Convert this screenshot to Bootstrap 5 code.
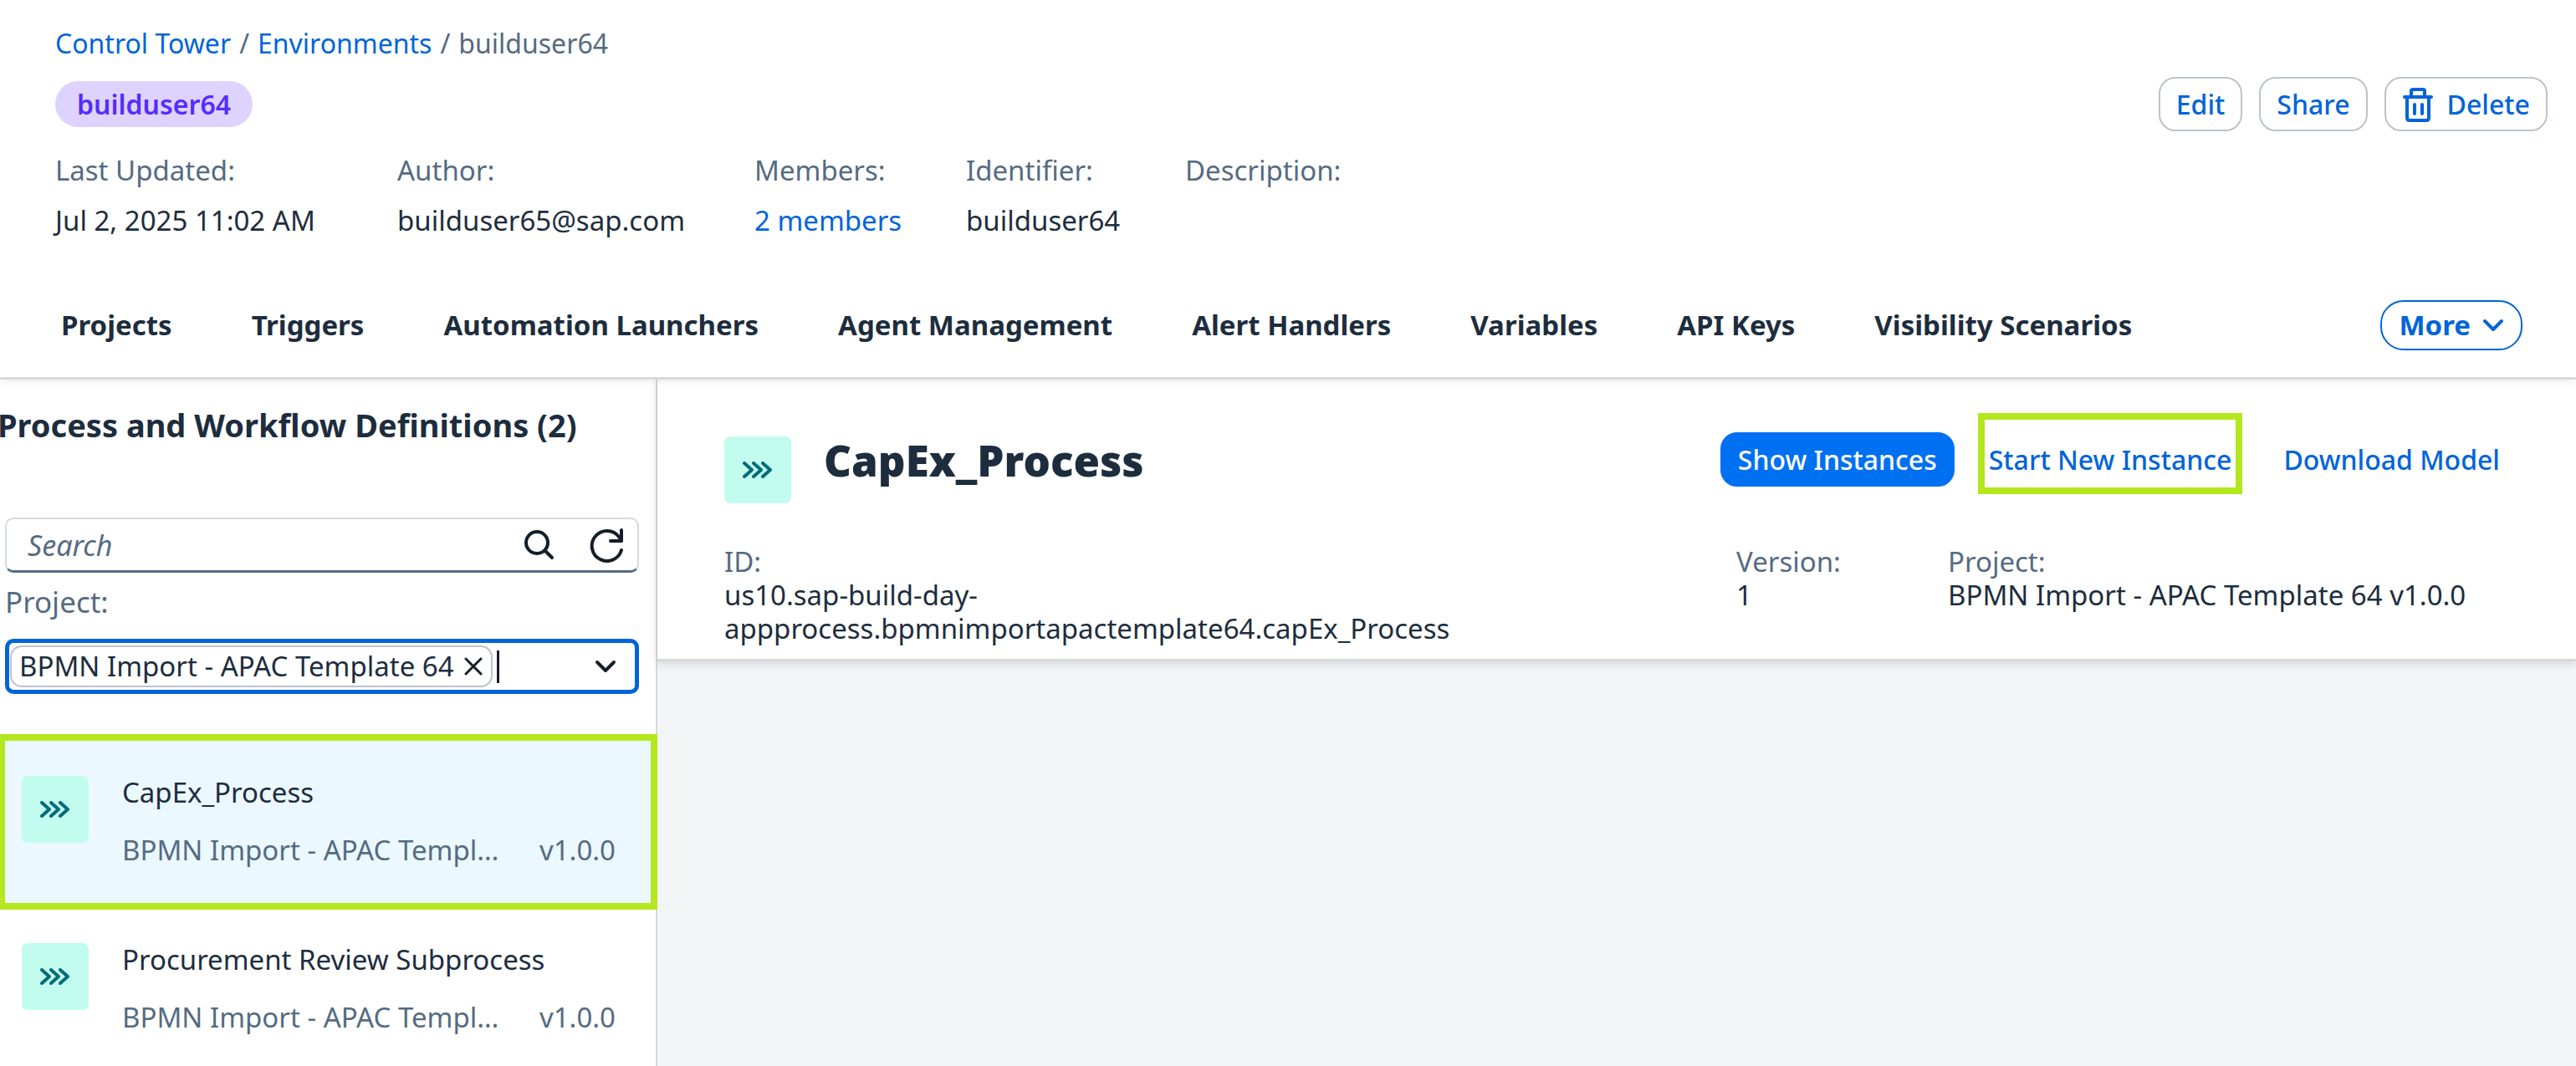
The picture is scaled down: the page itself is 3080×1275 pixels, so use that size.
<!DOCTYPE html>
<html lang="en">
<head>
<meta charset="utf-8">
<meta name="viewport" content="width=device-width, initial-scale=1">
<title>Control Tower - builduser64</title>
<link href="https://cdn.jsdelivr.net/npm/bootstrap@5.3.0/dist/css/bootstrap.min.css" rel="stylesheet">
<style>
  body { font-family: "Noto Sans", "Open Sans", sans-serif; font-size: 33px; line-height: 40px; color: #1d2d3e; background: #fff; }
  a { color: #0064d9; text-decoration: none; }
  svg { fill: none; stroke: currentColor; stroke-linecap: round; stroke-linejoin: round; flex: none; display: block; }
  .muted { color: #556b82; }

  .page-head { border-bottom: 3px solid #d9d9d9; box-shadow: 0 2px 8px rgba(34, 53, 72, .1); padding: 32px 34px 0 66px; }
  .breadcrumb { --bs-breadcrumb-divider-color: #556b82; --bs-breadcrumb-item-padding-x: 10px; --bs-breadcrumb-item-active-color: #556b82; --bs-breadcrumb-font-size: 32px; }
  .title-row { margin-top: 20px; }
  .env-tag { background: #ded3ff; color: #552cff; font-size: 32px; font-weight: 600; line-height: 55px; padding: 0 26px; }
  .btn-set { display: flex; gap: 20px; }
  .btn-ui { --bs-btn-font-size: 32px; --bs-btn-font-weight: 500; --bs-btn-line-height: 40px; --bs-btn-padding-x: 19px; --bs-btn-padding-y: 10px; --bs-btn-border-width: 2px; --bs-btn-border-radius: 20px; --bs-btn-color: #0064d9; height: 65px; white-space: nowrap; }
  .btn-line { --bs-btn-border-color: #bcc3ca; }
  .btn-fill { --bs-btn-bg: #0070f2; --bs-btn-border-color: #0070f2; --bs-btn-color: #fff; }
  .btn-more { --bs-btn-font-size: 33px; --bs-btn-font-weight: 700; --bs-btn-border-color: #0064d9; --bs-btn-border-radius: 28px; --bs-btn-padding-x: 20px; --bs-btn-padding-y: 8px; height: 60px; margin-right: 30px; gap: 14px; }
  .facts { display: grid; grid-template-columns: 409px 427px 253px 262px 1fr; margin: 27px 0 0; }
  .facts > div { display: flex; flex-direction: column; gap: 20px; }
  .facts dt, .facts dd, .specs dt, .specs dd { font-weight: 400; margin: 0; }
  .tab-row { margin: 75px 0 32px 7px; }
  .env-tabs { gap: 95px; }
  .env-tabs .nav-link { color: #1d2d3e; font-weight: 700; padding: 0; white-space: nowrap; }

  .side { width: 786px; border-right: 2px solid #d9d9d9; flex: none; }
  .side-title { font-size: 38px; line-height: 48px; font-weight: 700; margin: 30px 0 0 -3px; white-space: nowrap; }
  .field { margin: 0 20px 0 6px; }
  .search-box { border: 2px solid #d5dadd; border-bottom: 3px solid #556b82; border-radius: 10px; height: 66px; margin-top: 87px; padding: 0 16px 0 25px; }
  .plain-input { border: 0; outline: 0; background: none; padding: 0; min-width: 0; flex: 1; color: inherit; }
  .search-box .plain-input { font-style: italic; font-size: 34px; }
  .search-box .plain-input::placeholder { color: #556b82; opacity: 1; }
  .icon-btn { border: 0; background: none; padding: 0; color: #131e29; }
  .refresh { margin-left: 41px; }
  .project-label { font-size: 35px; line-height: 40px; margin: 15px 0 24px 6px; }
  .combo-box { border: 5px solid #0064d9; border-radius: 10px; height: 66px; padding: 0 22px 0 1px; }
  .token { border: 2px solid #bcc3ca; border-radius: 14px; height: 50px; padding: 0 10px 0 9px; gap: 12px; white-space: nowrap; }
  .caret { width: 3px; height: 39px; background: #131e29; margin-left: 5px; }

  .defs { margin-top: 53px; }
  .defs .def { display: flex; gap: 40px; height: 200px; padding: 45px 48px 0 26px; color: #1d2d3e; position: relative; }
  .defs .def.chosen { background: #ebf8ff; }
  .hint { position: absolute; border: 8px solid #b4e71d; pointer-events: none; }
  .hint-row { inset: -5px -2px -5px 0; border-left-width: 6px; z-index: 2; }
  .hint-btn { inset: -23px 8px -9px 8px; }
  .proc-tile { width: 80px; height: 80px; border-radius: 7px; background: #c2fcee; color: #046c7a; flex: none; display: flex; align-items: center; justify-content: center; }
  .def-sub { margin-top: 29px; }

  .detail { background: #f4f5f7; }
  .detail-head { background: #fff; border-bottom: 3px solid #d9d9d9; box-shadow: 0 3px 10px rgba(34, 53, 72, .16); padding: 63px 70px 16px 80px; }
  .detail-title { font-size: 51px; line-height: 66px; font-weight: 900; margin: 0 0 0 39px; }
  .detail-head .proc-tile { margin-top: 5px; }
  .specs { display: grid; grid-template-columns: 1210px 253px 1fr; margin: 50px 0 0; }
  .spec-id { max-width: 1000px; }
</style>
</head>
<body class="vh-100 d-flex flex-column overflow-hidden">

<header class="page-head position-relative z-1">
  <nav aria-label="Breadcrumb">
    <ol class="breadcrumb mb-0">
      <li class="breadcrumb-item"><a href="#">Control Tower</a></li>
      <li class="breadcrumb-item"><a href="#">Environments</a></li>
      <li class="breadcrumb-item active" aria-current="page">builduser64</li>
    </ol>
  </nav>
  <div class="title-row d-flex align-items-center justify-content-between">
    <span class="env-tag badge rounded-pill">builduser64</span>
    <div class="btn-set">
      <button type="button" class="btn btn-ui btn-line">Edit</button>
      <button type="button" class="btn btn-ui btn-line">Share</button>
      <button type="button" class="btn btn-ui btn-line d-flex align-items-center">
        <svg width="38" height="42" viewBox="0 0 38 42" stroke-width="4" class="me-3" aria-hidden="true"><path d="M3 12H35M11 12V5Q11 3 13 3H25Q27 3 27 5V12M6 12V37Q6 40 9 40H29Q32 40 32 37V12M15 21V32M24 21V32"/></svg>Delete</button>
    </div>
  </div>
  <dl class="facts">
    <div><dt class="muted">Last Updated:</dt><dd>Jul 2, 2025 11:02 AM</dd></div>
    <div><dt class="muted">Author:</dt><dd>builduser65@sap.com</dd></div>
    <div><dt class="muted">Members:</dt><dd><a href="#">2 members</a></dd></div>
    <div><dt class="muted">Identifier:</dt><dd>builduser64</dd></div>
    <div><dt class="muted">Description:</dt><dd></dd></div>
  </dl>
  <div class="tab-row d-flex align-items-center">
    <nav class="nav env-tabs flex-nowrap flex-grow-1" aria-label="Sections">
      <a class="nav-link" href="#">Projects</a>
      <a class="nav-link" href="#">Triggers</a>
      <a class="nav-link" href="#">Automation Launchers</a>
      <a class="nav-link" href="#">Agent Management</a>
      <a class="nav-link" href="#">Alert Handlers</a>
      <a class="nav-link" href="#">Variables</a>
      <a class="nav-link" href="#">API Keys</a>
      <a class="nav-link" href="#">Visibility Scenarios</a>
    </nav>
    <button type="button" class="btn btn-ui btn-more d-flex align-items-center">More
      <svg width="26" height="16" viewBox="0 0 26 16" stroke-width="4" aria-hidden="true"><path d="M3 3L13 13L23 3"/></svg></button>
  </div>
</header>

<div class="d-flex flex-grow-1 overflow-hidden">
  <aside class="side">
    <h2 class="side-title">Process and Workflow Definitions (2)</h2>
    <div class="field">
      <div class="search-box d-flex align-items-center">
        <input class="plain-input" type="search" placeholder="Search" aria-label="Search">
        <button class="icon-btn" type="button" aria-label="Search">
          <svg width="37" height="37" viewBox="0 0 37 37" stroke-width="4"><circle cx="16" cy="16" r="13"/><path d="M26 26L34 34"/></svg></button>
        <button class="icon-btn refresh" type="button" aria-label="Refresh">
          <svg width="42" height="42" viewBox="0 0 42 42" stroke-width="4"><path d="M39 27A18 18 0 1 1 36 11L39 16M39 3V16H26"/></svg></button>
      </div>
    </div>
    <label class="project-label muted d-block" for="project">Project:</label>
    <div class="field">
      <div class="combo-box d-flex align-items-center">
        <span class="token d-flex align-items-center">BPMN Import - APAC Template 64
          <button class="icon-btn" type="button" aria-label="Remove"><svg width="22" height="22" viewBox="0 0 22 22" stroke-width="3"><path d="M2 2L20 20M20 2L2 20"/></svg></button></span>
        <span class="caret"></span>
        <input class="plain-input" id="project" type="text">
        <button class="icon-btn" type="button" aria-label="Open list"><svg width="26" height="16" viewBox="0 0 26 16" stroke-width="4"><path d="M3 3L13 13L23 3"/></svg></button>
      </div>
    </div>
    <div class="defs">
      <a class="def chosen" href="#">
        <span class="proc-tile"><svg width="36" height="20" viewBox="0 0 36 20" stroke-width="4"><path d="M2 2L11 10L2 18M13 2L22 10L13 18M24 2L33 10L24 18"/></svg></span>
        <span class="flex-grow-1">
          <span class="d-block">CapEx_Process</span>
          <span class="def-sub muted d-flex justify-content-between"><span>BPMN Import - APAC Templ…</span><span>v1.0.0</span></span>
        </span>
        <span class="hint hint-row"></span>
      </a>
      <a class="def" href="#">
        <span class="proc-tile"><svg width="36" height="20" viewBox="0 0 36 20" stroke-width="4"><path d="M2 2L11 10L2 18M13 2L22 10L13 18M24 2L33 10L24 18"/></svg></span>
        <span class="flex-grow-1">
          <span class="d-block">Procurement Review Subprocess</span>
          <span class="def-sub muted d-flex justify-content-between"><span>BPMN Import - APAC Templ…</span><span>v1.0.0</span></span>
        </span>
      </a>
    </div>
  </aside>

  <main class="detail flex-grow-1">
    <div class="detail-head">
      <div class="d-flex align-items-start">
        <span class="proc-tile"><svg width="36" height="20" viewBox="0 0 36 20" stroke-width="4"><path d="M2 2L11 10L2 18M13 2L22 10L13 18M24 2L33 10L24 18"/></svg></span>
        <h1 class="detail-title flex-grow-1">CapEx_Process</h1>
        <div class="btn-set">
          <button type="button" class="btn btn-ui btn-fill">Show Instances</button>
          <div class="position-relative">
            <button type="button" class="btn btn-ui">Start New Instance</button>
            <span class="hint hint-btn"></span>
          </div>
          <button type="button" class="btn btn-ui">Download Model</button>
        </div>
      </div>
      <dl class="specs">
        <div><dt class="muted">ID:</dt><dd class="spec-id">us10.sap-build-day-appprocess.bpmnimportapactemplate64.capEx_Process</dd></div>
        <div><dt class="muted">Version:</dt><dd>1</dd></div>
        <div><dt class="muted">Project:</dt><dd>BPMN Import - APAC Template 64 v1.0.0</dd></div>
      </dl>
    </div>
  </main>
</div>

<script src="https://cdn.jsdelivr.net/npm/bootstrap@5.3.0/dist/js/bootstrap.bundle.min.js"></script>
</body>
</html>
